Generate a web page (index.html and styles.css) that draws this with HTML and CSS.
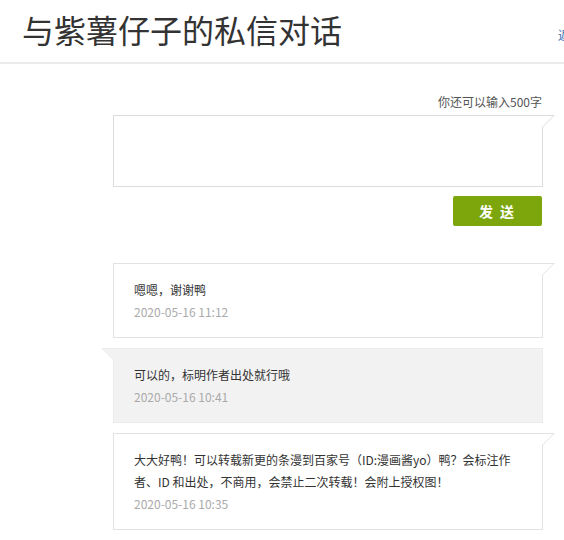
FILE: index.html
```html
<!DOCTYPE html>
<html lang="zh-CN">
<head>
	<meta charset="UTF-8">
	<title>私信对话</title>
	<link rel="stylesheet" href="styles.css">
</head>
<body>
	<div class="header">
		<div class="header_inner">
			<h1 class="title">与紫薯仔子的私信对话</h1>
			<a class="back_link" href="#">返回私信列表</a>
		</div>
	</div>

	<div class="main">
		<form class="send_form">
			<p class="counter">你还可以输入500字</p>
			<div class="bubble bubble_right input_box">
				<textarea id="msg_text"></textarea>
			</div>
			<div class="form_foot">
				<button type="button" class="send_btn">发 送</button>
			</div>
		</form>

		<ul class="msg_list">
			<li class="bubble bubble_right msg">
				<p class="msg_text">嗯嗯，谢谢鸭</p>
				<p class="msg_time">2020-05-16 11:12</p>
			</li>
			<li class="bubble bubble_left msg msg_other">
				<p class="msg_text">可以的，标明作者出处就行哦</p>
				<p class="msg_time">2020-05-16 10:41</p>
			</li>
			<li class="bubble bubble_right msg">
				<p class="msg_text">大大好鸭！可以转载新更的条漫到百家号（ID:漫画酱yo）鸭？会标注作者、ID 和出处，不商用，会禁止二次转载！会附上授权图！</p>
				<p class="msg_time">2020-05-16 10:35</p>
			</li>
		</ul>
	</div>
</body>
</html>
```

FILE: styles.css
```css
*{
	margin: 0;
	padding: 0;
	box-sizing: border-box;
	font-family: "Microsoft YaHei", "Noto Sans CJK SC", sans-serif;
}
body{
	background-color: #fff;
	color: #333;
	overflow-x: hidden;
}
.header{
	height: 64px;
	border-bottom: 2px solid #ebebeb;
	overflow: hidden;
}
.header_inner{
	width: 630px;
	padding-left: 22px;
	display: flex;
	justify-content: space-between;
	align-items: flex-start;
}
.title{
	font-size: 32px;
	font-weight: normal;
	line-height: 40px;
	padding-top: 9px;
	color: #333;
}
.back_link{
	font-size: 12px;
	line-height: 16px;
	padding-top: 27px;
	color: #3a6fb5;
	text-decoration: none;
}
.main{
	width: 430px;
	margin-left: 113px;
	padding-top: 30px;
}
.counter{
	text-align: right;
	font-size: 12px;
	line-height: 16px;
	color: #555;
	margin-bottom: 5px;
	padding-right: 1px;
}

/* speech bubble with a small corner tail */
.bubble{
	position: relative;
	border: 1px solid #e2e2e2;
	background-color: #fff;
}
.bubble::before,
.bubble::after{
	content: "";
	position: absolute;
	width: 0;
	height: 0;
}
.bubble_right::before{
	top: -1px;
	right: -13px;
	border-top: 13px solid #e2e2e2;
	border-right: 13px solid transparent;
}
.bubble_right::after{
	top: 0;
	right: -11px;
	border-top: 11px solid #fff;
	border-right: 11px solid transparent;
}
.bubble_left::before{
	top: -1px;
	left: -13px;
	border-top: 13px solid #e2e2e2;
	border-left: 13px solid transparent;
}
.bubble_left::after{
	top: 0;
	left: -11px;
	border-top: 11px solid #f2f2f2;
	border-left: 11px solid transparent;
}

.input_box{
	height: 72px;
	border-color: #dcdcdc;
}
.input_box::before{
	border-top-color: #dcdcdc;
}
#msg_text{
	width: 100%;
	height: 100%;
	border: none;
	outline: none;
	resize: none;
	padding: 6px 8px;
	font-size: 12px;
	background: transparent;
}
.form_foot{
	display: flex;
	justify-content: flex-end;
	padding-top: 9px;
}
.send_btn{
	width: 89px;
	height: 30px;
	margin-right: 1px;
	border: 1px solid transparent;
	border-radius: 2px;
	background-color: #7ca60b;
	color: #fff;
	font-size: 14px;
	font-weight: bold;
	letter-spacing: 2px;
}
.send_btn:hover{
	background-color: #6e940a;
}

.msg_list{
	list-style: none;
	padding-top: 37px;
}
.msg{
	padding: 15px 20px 14px;
	margin-bottom: 10px;
	font-size: 12px;
	line-height: 22px;
}
.msg_other{
	background-color: #f2f2f2;
	border-color: #ececec;
}
.msg_other::before{
	border-top-color: #ececec;
}
.msg_text{
	color: #333;
}
.msg_time{
	color: #aaa;
}
```
